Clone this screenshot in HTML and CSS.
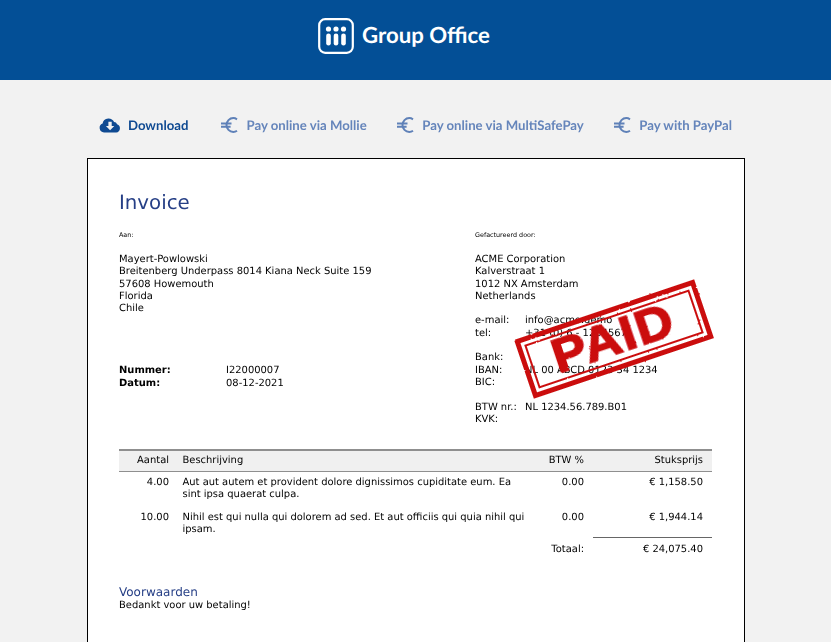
FILE: index.html
```html
<!DOCTYPE html>
<html lang="nl">
<head>
<meta charset="utf-8">
<title>Invoice</title>
<link rel="stylesheet" href="styles.css">
</head>
<body>
<svg class="defs" width="0" height="0" aria-hidden="true">
  <filter id="rough" x="-5%" y="-5%" width="110%" height="110%">
    <feTurbulence type="fractalNoise" baseFrequency="0.35" numOctaves="2" seed="4" result="n"/>
    <feDisplacementMap in="SourceGraphic" in2="n" scale="2"/>
  </filter>
</svg>
<header class="brand">
  <svg class="logo" viewBox="0 0 36 36" width="36" height="36" aria-hidden="true">
    <rect x="1.2" y="1.2" width="33.6" height="33.6" rx="6" fill="none" stroke="#fff" stroke-width="2.2"/>
    <g fill="#fff">
      <circle cx="10.5" cy="11" r="2.6"/><circle cx="18" cy="11" r="2.6"/><circle cx="25.5" cy="11" r="2.6"/>
      <rect x="8.2" y="15.5" width="4.6" height="12" rx="2.3"/><rect x="15.7" y="15.5" width="4.6" height="12" rx="2.3"/><rect x="23.2" y="15.5" width="4.6" height="12" rx="2.3"/>
    </g>
  </svg>
  <span class="brand-name">Group Office</span>
</header>
<nav class="actions">
  <a class="action primary">
    <svg class="icon-cloud" viewBox="0 0 22 16" width="22" height="16" aria-hidden="true"><path fill="#0f4a92" fill-rule="evenodd" d="M5 15.5A4.6 4.6 0 0 1 3.6 6.6 6 6 0 0 1 9.2 1.4a6.2 6.2 0 0 1 5.9 3.7 3.3 3.3 0 0 1 3 2.1 4.3 4.3 0 0 1-.9 8.3ZM9.4 4.8v4.3H6.9l4.2 4.2 4.2-4.2h-2.6V4.8Z"/></svg>
    Download</a>
  <a class="action">
    <svg class="icon-euro" viewBox="0 0 17 16" width="17" height="16" aria-hidden="true"><path fill="none" stroke="#5f81b8" stroke-width="2" d="M16 2.3C14.8 1.5 13.6 1.1 12.3 1.1 8.5 1.1 5.5 4.1 5.5 8s3 6.9 6.8 6.9c1.4 0 2.6-.4 3.7-1.2M0 6.4h10.5M0 9.7h9.6"/></svg>
    Pay online via Mollie</a>
  <a class="action">
    <svg class="icon-euro" viewBox="0 0 17 16" width="17" height="16" aria-hidden="true"><path fill="none" stroke="#5f81b8" stroke-width="2" d="M16 2.3C14.8 1.5 13.6 1.1 12.3 1.1 8.5 1.1 5.5 4.1 5.5 8s3 6.9 6.8 6.9c1.4 0 2.6-.4 3.7-1.2M0 6.4h10.5M0 9.7h9.6"/></svg>
    Pay online via MultiSafePay</a>
  <a class="action">
    <svg class="icon-euro" viewBox="0 0 17 16" width="17" height="16" aria-hidden="true"><path fill="none" stroke="#5f81b8" stroke-width="2" d="M16 2.3C14.8 1.5 13.6 1.1 12.3 1.1 8.5 1.1 5.5 4.1 5.5 8s3 6.9 6.8 6.9c1.4 0 2.6-.4 3.7-1.2M0 6.4h10.5M0 9.7h9.6"/></svg>
    Pay with PayPal</a>
</nav>
<main class="sheet">
  <h1 class="title">Invoice</h1>
  <div class="columns">
    <section class="col-left">
      <div class="tiny">Aan:</div>
      <p class="lines">Mayert-Powlowski<br>Breitenberg Underpass 8014 Kiana Neck Suite 159<br>57608 Howemouth<br>Florida<br>Chile</p>
      <dl class="meta">
        <dt>Nummer:</dt><dd>I22000007</dd>
        <dt>Datum:</dt><dd>08-12-2021</dd>
      </dl>
    </section>
    <section class="col-right">
      <div class="tiny">Gefactureerd door:</div>
      <p class="lines">ACME Corporation<br>Kalverstraat 1<br>1012 NX Amsterdam<br>Netherlands</p>
      <dl class="facts gap-first">
        <dt>e-mail:</dt><dd>info@acme.demo</dd>
        <dt>tel:</dt><dd>+31 (0) 6 - 1234567</dd>
      </dl>
      <dl class="facts gap">
        <dt>Bank:</dt><dd></dd>
        <dt>IBAN:</dt><dd>NL 00 ABCD 0123 34 1234</dd>
        <dt>BIC:</dt><dd></dd>
      </dl>
      <dl class="facts gap">
        <dt>BTW nr.:</dt><dd>NL 1234.56.789.B01</dd>
        <dt>KVK:</dt><dd></dd>
      </dl>
    </section>
  </div>
  <table class="items">
    <colgroup><col class="c-qty"><col class="c-desc"><col class="c-vat"><col class="c-price"></colgroup>
    <thead>
      <tr><th class="num">Aantal</th><th>Beschrijving</th><th class="num">BTW %</th><th class="num">Stuksprijs</th></tr>
    </thead>
    <tbody>
      <tr><td class="num">4.00</td><td>Aut aut autem et provident dolore dignissimos cupiditate eum. Ea sint ipsa quaerat culpa.</td><td class="num">0.00</td><td class="num">€ 1,158.50</td></tr>
      <tr><td class="num">10.00</td><td>Nihil est qui nulla qui dolorem ad sed. Et aut officiis qui quia nihil qui ipsam.</td><td class="num">0.00</td><td class="num">€ 1,944.14</td></tr>
    </tbody>
    <tfoot>
      <tr><td></td><td></td><td class="num">Totaal:</td><td class="num total">€ 24,075.40</td></tr>
    </tfoot>
  </table>
  <h2 class="terms-title">Voorwaarden</h2>
  <p class="terms">Bedankt voor uw betaling!</p>
  <div class="stamp"><span>PAID</span></div>
</main>
</body>
</html>
```
FILE: styles.css
```css
html, body { margin: 0; padding: 0; height: 642px; overflow: hidden; }
body { background: #f2f2f2; font-family: "DejaVu Sans", sans-serif; color: #000; text-rendering: geometricPrecision; }
.defs { display: block; height: 0; }
.brand { height: 80px; background: #034f96; display: flex; align-items: center; justify-content: center; gap: 8px; padding-right: 23px; box-sizing: border-box; padding-bottom: 9px; }
.brand-name { font-family: Lato, sans-serif; font-weight: 700; font-size: 22.2px; color: #fff; margin-bottom: 2px; }
.actions { height: 78px; display: flex; align-items: center; justify-content: center; gap: 30.5px; box-sizing: border-box; padding-top: 12px; filter: saturate(1); }
.action { display: flex; align-items: center; gap: 8px; font-family: Lato, sans-serif; font-weight: 700; font-size: 13.2px; color: #6585bb; }
.action.primary { color: #0f4a92; gap: 6.5px; margin-right: 2.5px; margin-left: 0.5px; }
.sheet { position: relative; width: 658px; margin-left: 87px; height: 484px; box-sizing: border-box; background: #fff; border: 1px solid #000; border-bottom: 0; padding: 31px 32px 0 31px; filter: saturate(1); }
.title { margin: 0; font-weight: 400; font-size: 19.8px; line-height: 25px; color: #263f86; }
.columns { display: grid; grid-template-columns: 356px 1fr; margin-top: 15px; font-size: 9.95px; line-height: 12.3px; }
.tiny { font-size: 6.4px; line-height: 10px; }
.lines { margin: 14px 0 0; }
.meta { margin: 50px 0 0; display: grid; grid-template-columns: 107px 1fr; }
.meta dt { font-weight: 700; }
.meta dd, .facts dd { margin: 0; }
.facts { margin: 0; display: grid; grid-template-columns: 50px 1fr; }
.facts.gap-first, .facts.gap { margin-top: 12.3px; }
.items { width: 593px; margin-top: 23px; border-collapse: collapse; table-layout: fixed; font-size: 9.95px; line-height: 12.5px; }
.c-qty { width: 59px; }
.c-desc { width: 355px; }
.c-vat { width: 60px; }
.c-price { width: 119px; }
.items th { background: #f0f0f0; font-weight: 400; text-align: left; height: 21px; padding: 1px 4.5px 0; border-top: 2px solid #8f8f8f; border-bottom: 1px solid #8f8f8f; box-sizing: border-box; }
.items td { padding: 0 4.5px 10px; vertical-align: top; }
.items tbody tr:first-child td { padding-top: 5px; }
.items tbody tr:last-child td { padding-bottom: 1px; }
.items .num { text-align: right; padding-right: 9px; }
.items tfoot td { padding-top: 6px; padding-bottom: 0; }
.items td.total { border-top: 1px solid #666; }
.terms-title { margin: 28px 0 0; font-weight: 400; font-size: 12px; line-height: 15px; color: #263f86; }
.terms { margin: 0; font-size: 9.95px; line-height: 12.3px; }
.stamp { position: absolute; left: 431px; top: 149px; width: 190px; height: 62px; box-sizing: border-box; border: 5px solid #cb0a0f; outline: 2px solid #cb0a0f; outline-offset: -10px; transform: rotate(-18.6deg); display: flex; align-items: center; justify-content: center; filter: url(#rough); }
.stamp span { font-family: "Liberation Sans", sans-serif; font-weight: 700; font-size: 48px; line-height: 1; color: #cb0a0f; -webkit-text-stroke: 1.5px #cb0a0f; letter-spacing: 1.5px; transform: scaleX(1.08); }
```
